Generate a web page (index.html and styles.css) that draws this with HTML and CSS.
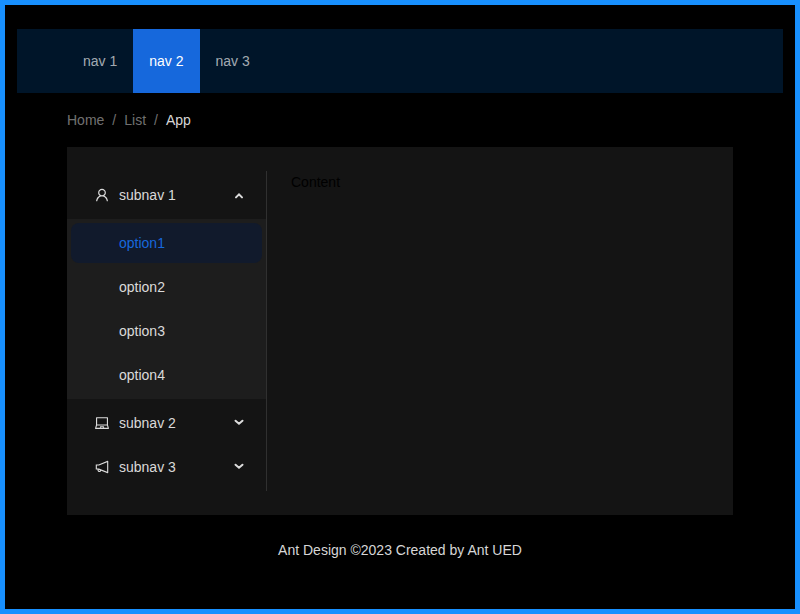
FILE: index.html
```html
<!DOCTYPE html>
<html lang="en">
<head>
<meta charset="utf-8">
<meta name="viewport" content="width=device-width, initial-scale=1">
<title>Ant Design Layout</title>
<link rel="stylesheet" href="styles.css">
</head>
<body>
<header class="header">
  <nav class="topnav">
    <a class="topnav-item" href="#nav1">nav 1</a>
    <a class="topnav-item topnav-item-active" href="#nav2">nav 2</a>
    <a class="topnav-item" href="#nav3">nav 3</a>
  </nav>
</header>
<div class="page">
  <nav class="breadcrumb">
    <a href="#home">Home</a><span class="separator">/</span><a href="#list">List</a><span class="separator">/</span><span class="current">App</span>
  </nav>
  <div class="panel">
    <aside class="sider">
      <button class="menu-title" type="button" aria-expanded="true">
        <svg class="icon" viewBox="64 64 896 896" aria-hidden="true"><path d="M858.5 763.6a374 374 0 00-80.6-119.5 375.63 375.63 0 00-119.5-80.6c-.4-.2-.8-.3-1.2-.5C719.5 518 760 444.7 760 362c0-137-111-248-248-248S264 225 264 362c0 82.7 40.5 156 102.8 201.1-.4.2-.8.3-1.2.5-44.8 18.9-85 46-119.5 80.6a375.63 375.63 0 00-80.6 119.5A371.7 371.7 0 00136 901.8a8 8 0 008 8.2h60c4.4 0 7.9-3.5 8-7.8 2-77.2 33-149.5 87.8-204.3 56.7-56.7 132-87.9 212.2-87.9s155.5 31.2 212.2 87.9C779 752.7 810 825 812 902.2c.1 4.4 3.6 7.8 8 7.8h60a8 8 0 008-8.2c-1-47.8-10.9-94.3-29.5-138.2zM512 534c-45.9 0-89.1-17.9-121.6-50.4S340 407.9 340 362c0-45.9 17.9-89.1 50.4-121.6S466.1 190 512 190s89.1 17.9 121.6 50.4S684 316.1 684 362c0 45.9-17.9 89.1-50.4 121.6S557.9 534 512 534z"/></svg>
        <span class="menu-label">subnav 1</span>
        <svg class="arrow" viewBox="0 0 10 10" aria-hidden="true"><path d="M2 7.4L5 4.4L8 7.4"/></svg>
      </button>
      <ul class="submenu">
        <li><a class="option option-selected" href="#option1">option1</a></li>
        <li><a class="option" href="#option2">option2</a></li>
        <li><a class="option" href="#option3">option3</a></li>
        <li><a class="option" href="#option4">option4</a></li>
      </ul>
      <button class="menu-title" type="button" aria-expanded="false">
        <svg class="icon" viewBox="64 64 896 896" aria-hidden="true"><path d="M956.9 845.1L896.4 632V168c0-17.7-14.3-32-32-32h-704c-17.7 0-32 14.3-32 32v464L67.9 845.1C60.4 866 75.8 888 98 888h828.8c22.2 0 37.6-22 30.1-42.9zM200.4 208h624v395h-624V208zm228.3 608l8.1-37h150.3l8.1 37H428.7zm224 0l-19.1-86.7c-.8-3.7-4.1-6.3-7.8-6.3H398.2c-3.8 0-7 2.6-7.8 6.3L371.3 816H151l42.3-149h638.2l42.3 149H652.7z"/></svg>
        <span class="menu-label">subnav 2</span>
        <svg class="arrow" viewBox="0 0 10 10" aria-hidden="true"><path d="M1.5 2.7L5 5.7L8.5 2.7"/></svg>
      </button>
      <button class="menu-title" type="button" aria-expanded="false">
        <svg class="icon" viewBox="64 64 896 896" aria-hidden="true"><path d="M880 112c-3.8 0-7.7.7-11.6 2.3L292 345.9H128c-8.8 0-16 7.4-16 16.6v299c0 9.2 7.2 16.6 16 16.6h101.7c-3.7 11.6-5.7 23.9-5.7 36.4 0 65.9 53.8 119.5 120 119.5 55.4 0 102.1-37.6 115.9-88.4l408.6 164.2c3.9 1.5 7.8 2.3 11.6 2.3 16.9 0 32-14.2 32-33.2V145.2C912 126.2 897 112 880 112zM344 762.3c-26.5 0-48-21.4-48-47.8 0-11.2 3.9-21.9 11-30.4l84.9 34.1c-2 24.6-22.7 44.1-47.9 44.1zm496 58.4L318.8 611.3l-12.9-5.2H184V417.9h121.9l12.9-5.2L840 203.3v617.4z"/></svg>
        <span class="menu-label">subnav 3</span>
        <svg class="arrow" viewBox="0 0 10 10" aria-hidden="true"><path d="M1.5 2.7L5 5.7L8.5 2.7"/></svg>
      </button>
    </aside>
    <main class="content">Content</main>
  </div>
</div>
<footer class="footer">Ant Design ©2023 Created by Ant UED</footer>
</body>
</html>
```
FILE: styles.css
```css
* {
  box-sizing: border-box;
}

body {
  margin: 0;
  min-height: 100vh;
  padding: 24px 12px;
  border: 5px solid #1890ff;
  background: #000;
  color: rgba(255, 255, 255, 0.85);
  font: 14px/22px "Liberation Sans", Arial, sans-serif;
}

a {
  color: inherit;
  text-decoration: none;
}

.header {
  padding: 0 50px;
  background: #001529;
}

.topnav {
  display: flex;
}

.topnav-item {
  padding: 0 16px;
  line-height: 64px;
  color: rgba(255, 255, 255, 0.65);
}

.topnav-item-active {
  background: #1668dc;
  color: #fff;
}

.page {
  padding: 0 50px;
}

.breadcrumb {
  display: flex;
  margin: 16px 0;
  color: rgba(255, 255, 255, 0.45);
}

.separator {
  margin: 0 8px;
}

.current {
  color: rgba(255, 255, 255, 0.85);
}

.panel {
  display: flex;
  padding: 24px 0;
  background: #141414;
}

.sider {
  flex: 0 0 200px;
  border-right: 1px solid #303030;
  display: flow-root;
}

.menu-title {
  display: flex;
  align-items: center;
  gap: 10px;
  width: calc(100% - 8px);
  height: 40px;
  margin: 4px;
  padding: 0 18px 0 24px;
  border: 0;
  border-radius: 8px;
  background: none;
  color: inherit;
  font: inherit;
  text-align: left;
  cursor: pointer;
}

.menu-title + .menu-title {
  margin-top: 0;
}

.icon {
  width: 14px;
  height: 14px;
  fill: currentColor;
}

.menu-label {
  flex: 1;
}

.arrow {
  width: 10px;
  height: 10px;
  fill: none;
  stroke: currentColor;
  stroke-width: 2;
  stroke-linecap: round;
}

.submenu {
  display: grid;
  gap: 4px;
  margin: 0;
  padding: 4px;
  list-style: none;
  background: #1d1d1d;
}

.option {
  display: block;
  padding-left: 48px;
  border-radius: 8px;
  line-height: 40px;
}

.option-selected {
  background: #111a2c;
  color: #1668dc;
}

.content {
  flex: 1;
  min-height: 280px;
  padding: 0 24px;
  color: #000;
}

.footer {
  padding: 24px 50px;
  text-align: center;
}
```
